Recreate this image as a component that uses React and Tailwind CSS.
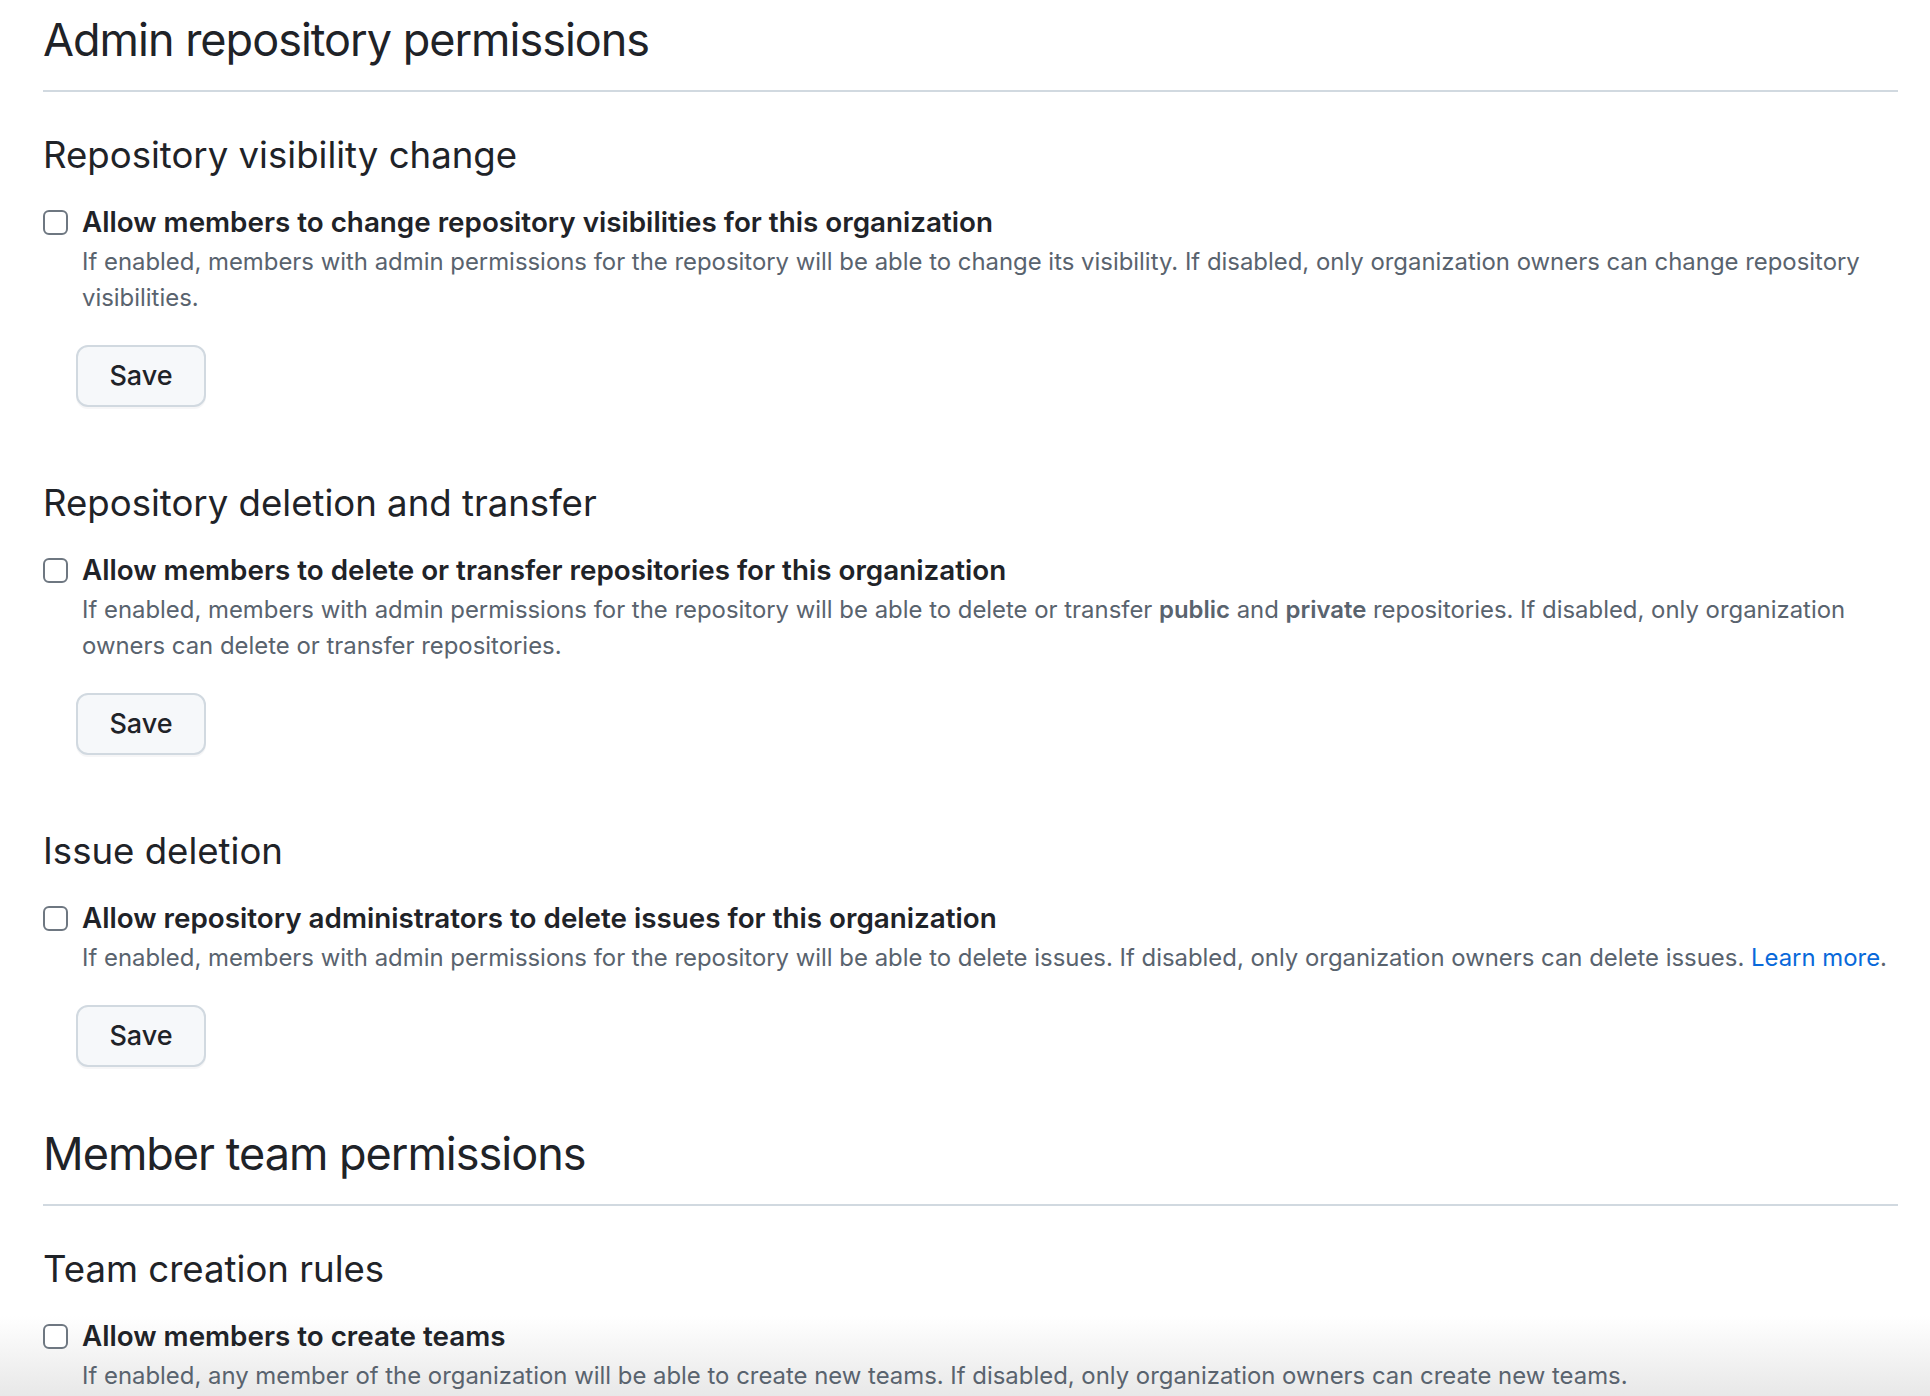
import React from "react";

const FONT = { fontFamily: "Inter, 'Noto Sans', 'Liberation Sans', sans-serif" };

function SaveButton() {
  return (
    <div className="ml-[33px]">
      <button
        type="button"
        className="w-[130px] h-[62px] rounded-[12px] border-2 border-[#d1d9e0] bg-[#f6f8fa] text-[27px] font-medium text-[#1f2328] shadow-[0_2px_0_rgba(31,35,40,0.04)]"
      >
        Save
      </button>
    </div>
  );
}

function Option({ label, children }) {
  return (
    <div className="flex flex-col">
      <div className="flex items-center">
        <input
          type="checkbox"
          className="appearance-none w-[25px] h-[25px] border-2 border-[#6e7781] rounded-[6px] bg-white shrink-0"
        />
        <span className="ml-[14px] text-[27.8px] leading-[34px] font-semibold text-[#1f2328]">{label}</span>
      </div>
      <p className="mt-[5px] pl-[39px] text-[23.9px] leading-[36px] text-[#59636e]">{children}</p>
    </div>
  );
}

function Section({ title, label, children, save = true, first = false }) {
  return (
    <section className={first ? "mt-[39px]" : "mt-[72px]"}>
      <h3 className="text-[36.6px] leading-[48px] font-normal text-[#1f2328]">{title}</h3>
      <div className="mt-[26px]">
        <Option label={label}>{children}</Option>
      </div>
      {save && (
        <div className="mt-[29px]">
          <SaveButton />
        </div>
      )}
    </section>
  );
}

function Subhead({ children }) {
  return (
    <div className="pb-[20px] border-b-2 border-[#d1d9e0]">
      <h2 className="text-[45px] leading-[60px] font-normal tracking-[-1px] text-[#1f2328]">{children}</h2>
    </div>
  );
}

export default function App() {
  return (
    <div className="relative h-[1396px] overflow-hidden bg-white" style={FONT}>
      <div className="pointer-events-none absolute left-0 right-0 bottom-0 h-[80px] bg-gradient-to-b from-white to-[#e8e8e8]" />
      <div className="relative pl-[43px] pr-[32px] pt-[10px]">
        <Subhead>Admin repository permissions</Subhead>

        <Section
          first
          title="Repository visibility change"
          label="Allow members to change repository visibilities for this organization"
        >
          If enabled, members with admin permissions for the repository will be able to change its visibility. If
          disabled, only organization owners can change repository visibilities.
        </Section>

        <Section
          title="Repository deletion and transfer"
          label="Allow members to delete or transfer repositories for this organization"
        >
          If enabled, members with admin permissions for the repository will be able to delete or transfer{" "}
          <strong className="font-semibold">public</strong> and <strong className="font-semibold">private</strong>{" "}
          repositories. If disabled, only organization owners can delete or transfer repositories.
        </Section>

        <Section
          title="Issue deletion"
          label="Allow repository administrators to delete issues for this organization"
        >
          If enabled, members with admin permissions for the repository will be able to delete issues. If disabled,
          only organization owners can delete issues.{" "}
          <a href="#" className="text-[#0969da]">
            Learn more
          </a>
          .
        </Section>

        <div className="mt-[57px]">
          <Subhead>Member team permissions</Subhead>
        </div>

        <Section first save={false} title="Team creation rules" label="Allow members to create teams">
          If enabled, any member of the organization will be able to create new teams. If disabled, only organization
          owners can create new teams.
        </Section>
      </div>
    </div>
  );
}
